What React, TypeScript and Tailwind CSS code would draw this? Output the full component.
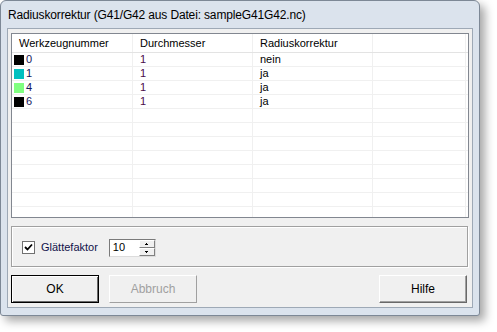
import React from 'react'

const rows = [
  { nr: '0', color: '#000000', d: '1', r: 'nein' },
  { nr: '1', color: '#00c0c0', d: '1', r: 'ja' },
  { nr: '4', color: '#80ff80', d: '1', r: 'ja' },
  { nr: '6', color: '#000000', d: '1', r: 'ja' },
]

const font = { fontFamily: '"Liberation Sans", Arial, sans-serif' }

function Cell({ w, children, className = '' }: { w: string; children?: React.ReactNode; className?: string }) {
  return (
    <div className={`${w} h-full shrink-0 border-r border-[#f0f0f0] flex items-center overflow-hidden ${className}`}>
      {children}
    </div>
  )
}

export default function App() {
  const empty = Array.from({ length: 8 })

  return (
    <div className="w-[497px] h-[332px] bg-white" style={font}>
      <div className="w-[480px] h-[316px] flex flex-col bg-[#dbe3ed] border border-[#7d8896] rounded-t-[6px] rounded-b-[3px] shadow-[5px_5px_10px_rgba(0,0,0,0.35)]">
        {/* title bar */}
        <div className="h-[27px] shrink-0 flex items-center pl-[7px] text-[12px] tracking-[-0.15px] text-black">
          Radiuskorrektur (G41/G42 aus Datei: sampleG41G42.nc)
        </div>

        {/* client area */}
        <div className="mx-[6px] mb-[7px] flex-1 flex flex-col border border-[#9ea9b6] bg-[#f0f0f0] text-[11px]">
          {/* list view */}
          <div className="ml-[3px] mt-[4px] w-[458px] h-[185px] shrink-0 border border-[#828790] bg-white flex flex-col overflow-hidden">
            <div className="h-[19px] shrink-0 flex border-b border-[#e3e3e3] text-black">
              <Cell w="w-[121px]" className="pl-[7px] border-[#e3e3e3]">Werkzeugnummer</Cell>
              <Cell w="w-[120px]" className="pl-[7px] border-[#e3e3e3]">Durchmesser</Cell>
              <Cell w="w-[120px]" className="pl-[7px] border-[#e3e3e3]">Radiuskorrektur</Cell>
              <Cell w="w-[93px]" className="border-[#e3e3e3]" />
            </div>
            {rows.map((r) => (
              <div key={r.nr} className="h-[14px] shrink-0 flex border-b border-[#f0f0f0]">
                <Cell w="w-[121px]" className="pl-[2px]">
                  <span className="w-[10px] h-[10px] mr-[2px]" style={{ backgroundColor: r.color }} />
                  <span className="text-[#14145a]">{r.nr}</span>
                </Cell>
                <Cell w="w-[120px]" className="pl-[7px] text-[#4a0a4a]">{r.d}</Cell>
                <Cell w="w-[120px]" className="pl-[7px] text-black">{r.r}</Cell>
                <Cell w="w-[93px]" />
              </div>
            ))}
            {empty.map((_, i) => (
              <div key={i} className="h-[14px] shrink-0 flex border-b border-[#f0f0f0]">
                <Cell w="w-[121px]" />
                <Cell w="w-[120px]" />
                <Cell w="w-[120px]" />
                <Cell w="w-[93px]" />
              </div>
            ))}
          </div>

          {/* group box */}
          <div className="ml-[3px] mt-[8px] w-[457px] h-[41px] shrink-0 border border-[#a0a0a0] shadow-[inset_1px_1px_0_#ffffff,1px_1px_0_#ffffff] flex items-center pl-[10px] pt-[2px]">
            <div className="w-[13px] h-[13px] border border-[#707070] bg-white flex items-center justify-center">
              <svg width="9" height="9" viewBox="0 0 9 9">
                <path d="M1 4 L3.5 6.5 L8 1.5" stroke="#000" strokeWidth="1.8" fill="none" />
              </svg>
            </div>
            <span className="ml-[6px] text-[#10104a]">Glättefaktor</span>
            <div className="ml-[11px] w-[47px] h-[18px] flex border border-[#7a7a7a] border-r-[#dcdcdc] border-b-[#dcdcdc] bg-white">
              <div className="flex-1 flex items-center pl-[3px] text-black">10</div>
              <div className="w-[16px] flex flex-col">
                <div className="flex-1 bg-[#f0f0f0] border border-white border-r-[#808080] border-b-[#808080] flex items-center justify-center">
                  <svg width="3" height="2" viewBox="0 0 3 2"><path d="M1 0 H2 V1 H3 V2 H0 V1 H1 Z" fill="#000" /></svg>
                </div>
                <div className="flex-1 bg-[#f0f0f0] border border-white border-r-[#808080] border-b-[#808080] flex items-center justify-center">
                  <svg width="3" height="2" viewBox="0 0 3 2"><path d="M0 0 H3 V1 H2 V2 H1 V1 H0 Z" fill="#000" /></svg>
                </div>
              </div>
            </div>
          </div>

          {/* buttons */}
          <div className="ml-[3px] mt-[8px] w-[456px] h-[28px] shrink-0 flex text-[12px]">
            <button className="w-[88px] h-full border border-black shadow-[inset_1px_1px_0_#ffffff,inset_-1px_-1px_0_#696969] bg-[#f0f0f0] text-black">
              OK
            </button>
            <button className="ml-[10px] w-[88px] h-full border border-white border-r-[#a0a0a0] border-b-[#a0a0a0] bg-[#f0f0f0] text-[#a0a0a0]">
              Abbruch
            </button>
            <div className="flex-1" />
            <button className="w-[88px] h-full border border-white border-r-[#696969] border-b-[#696969] shadow-[inset_-1px_-1px_0_#a0a0a0] bg-[#f0f0f0] text-black">
              Hilfe
            </button>
          </div>
        </div>
      </div>
    </div>
  )
}
